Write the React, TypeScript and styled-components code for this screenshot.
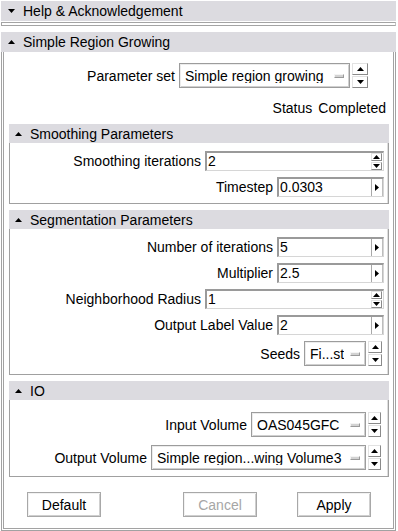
import React from 'react';
import styled, { createGlobalStyle } from 'styled-components';

const GlobalStyle = createGlobalStyle`
    html, body {
        margin: 0;
        padding: 0;
        background: #fff;
    }
    body {
        font-family: "Liberation Sans", Arial, Helvetica, sans-serif;
        font-size: 14px;
        color: #000;
    }
    * {
        box-sizing: border-box;
    }
`;

/**
 * Frames and headers.
 */
const Page = styled.div`
    width: 398px;
    height: 531px;
    padding: 1px 2px 0 1px;
    overflow: hidden;
`;
const Header = styled.div<{ $inner?: boolean }>`
    display: flex;
    align-items: center;
    gap: 8px;
    height: ${p => p.$inner ? 19 : 20}px;
    padding-left: ${p => p.$inner ? 6 : 7}px;
    background: #dcdbe0;
    line-height: 1;
    white-space: nowrap;
`;
const CollapsedBody = styled.div`
    margin: 1px 0 6px;
    height: 4px;
    border: 1px solid #a4a4a4;
    border-right-color: #c4c4c4;
`;
const OuterBody = styled.div`
    padding: 11px 4px 11px 5px;
    border: 3px double #a2a2a2;
    border-top: 0;
`;
const Section = styled.div`
    margin-top: 6px;
`;
const SectionBody = styled.div<{ $pt: number; $pb: number; $gap: number }>`
    display: flex;
    flex-direction: column;
    gap: ${p => p.$gap}px;
    padding: ${p => p.$pt}px 4px ${p => p.$pb}px 4px;
    border: 1px solid #a0a0a0;
    border-top: 0;
    box-shadow: inset -1px 0 0 #dedede;
`;

/**
 * Rows and widgets.
 */
const Row = styled.div<{ $pr?: number; $mt?: number; $h?: number }>`
    display: flex;
    align-items: center;
    justify-content: flex-end;
    gap: 4px;
    height: ${p => p.$h ?? 20}px;
    margin-top: ${p => p.$mt ?? 0}px;
    margin-right: ${p => p.$pr ?? 0}px;
    white-space: nowrap;
`;
const Label = styled.span`
    line-height: 1;
`;
const StatusValue = styled.span`
    margin-left: 2px;
    line-height: 1;
`;
const Entry = styled.div<{ $w: number }>`
    display: flex;
    align-items: stretch;
    width: ${p => p.$w}px;
    height: 20px;
    background: #fff;
    border-style: solid;
    border-width: 2px 1px 1px 2px;
    border-color: #9a9a9a #d6d6d6 #d6d6d6 #9a9a9a;
`;
const EntryValue = styled.span`
    flex: 1;
    padding-left: 1px;
    line-height: 17px;
`;
const InlineSpin = styled.div`
    display: flex;
    flex-direction: column;
    gap: 1px;
    width: 11px;
    margin-right: 1px;
`;
const SpinButton = styled.div`
    display: flex;
    align-items: center;
    justify-content: center;
    flex: 1;
    background: #fff;
    border-style: solid;
    border-width: 1px;
    border-color: #e2e2e2 #8a8a8a #8a8a8a #e2e2e2;
`;
const ArrowButton = styled.div`
    display: flex;
    align-items: center;
    justify-content: center;
    width: 12px;
    border-left: 1px solid #a8a8a8;
    border-right: 1px solid #bdbdbd;
`;
const ComboGroup = styled.div`
    display: flex;
    align-items: stretch;
    gap: 2px;
    height: 25px;
`;
const Combo = styled.div<{ $w: number }>`
    display: flex;
    align-items: center;
    width: ${p => p.$w}px;
    padding: 0 5px 0 5px;
    background: #fff;
    border: 1px solid #9c9c9c;
    box-shadow: inset 1px 1px 0 #ececec, inset -1px -1px 0 #d0d0d0;
`;
const ComboText = styled.span`
    flex: 1;
    overflow: hidden;
    line-height: 1;
`;
const Indicator = styled.span`
    width: 10px;
    height: 4px;
    margin-left: 6px;
    background: #d2d2d2;
    border-style: solid;
    border-width: 1px;
    border-color: #f4f4f4 #9a9a9a #9a9a9a #f4f4f4;
`;
const Spin = styled.div<{ $w: number }>`
    display: flex;
    flex-direction: column;
    gap: 1px;
    width: ${p => p.$w}px;
`;
const ButtonBar = styled.div`
    display: flex;
    margin-top: 15px;
`;
const Button = styled.div<{ $ml: number; $disabled?: boolean }>`
    display: flex;
    align-items: center;
    justify-content: center;
    width: 74px;
    height: 25px;
    margin-left: ${p => p.$ml}px;
    color: ${p => p.$disabled ? '#a6a6a6' : '#000'};
    border: 1px solid #a8a8a8;
    box-shadow: inset 1px 1px 0 #f2f2f2, inset -1px -1px 0 #cfcfcf;
    line-height: 1;
`;

/**
 * Small drawn parts.
 */
function Tri(props: { dir: 'up' | 'down' | 'right'; w?: number; h?: number }) {
    const { dir } = props;
    const w = props.w ?? (dir === 'right' ? 4 : 7);
    const h = props.h ?? (dir === 'right' ? 7 : 4);
    const points = dir === 'up'
        ? `0,${h} ${w / 2},0 ${w},${h}`
        : dir === 'down'
            ? `0,0 ${w / 2},${h} ${w},0`
            : `0,0 ${w},${h / 2} 0,${h}`;
    return (
        <svg width={w} height={h} viewBox={`0 0 ${w} ${h}`} style={{ display: 'block' }}>
            <polygon points={points} fill="#000" />
        </svg>
    );
}

function SpinPair(props: { w: number }) {
    return (
        <Spin $w={props.w}>
            <SpinButton><Tri dir="up" /></SpinButton>
            <SpinButton><Tri dir="down" /></SpinButton>
        </Spin>
    );
}

function SpinEntry(props: { w: number; value: string }) {
    return (
        <Entry $w={props.w}>
            <EntryValue>{props.value}</EntryValue>
            <InlineSpin>
                <SpinButton><Tri dir="up" /></SpinButton>
                <SpinButton><Tri dir="down" /></SpinButton>
            </InlineSpin>
        </Entry>
    );
}

function ArrowEntry(props: { w: number; value: string }) {
    return (
        <Entry $w={props.w}>
            <EntryValue>{props.value}</EntryValue>
            <ArrowButton><Tri dir="right" /></ArrowButton>
        </Entry>
    );
}

function ComboSpin(props: { w: number; spin: number; value: string }) {
    return (
        <ComboGroup>
            <Combo $w={props.w}>
                <ComboText>{props.value}</ComboText>
                <Indicator />
            </Combo>
            <SpinPair w={props.spin} />
        </ComboGroup>
    );
}

export default function App() {
    return (
        <Page>
            <GlobalStyle />
            <Header>
                <Tri dir="down" />
                <span>Help &amp; Acknowledgement</span>
            </Header>
            <CollapsedBody />

            <Header>
                <Tri dir="up" />
                <span>Simple Region Growing</span>
            </Header>
            <OuterBody>
                <Row $h={25} $pr={21}>
                    <Label>Parameter set</Label>
                    <ComboSpin w={171} spin={16} value="Simple region growing" />
                </Row>
                <Row $mt={10} $pr={3}>
                    <Label>Status</Label>
                    <StatusValue>Completed</StatusValue>
                </Row>

                <Section>
                    <Header $inner>
                        <Tri dir="up" />
                        <span>Smoothing Parameters</span>
                    </Header>
                    <SectionBody $pt={8} $pb={6} $gap={6}>
                        <Row>
                            <Label>Smoothing iterations</Label>
                            <SpinEntry w={179} value="2" />
                        </Row>
                        <Row>
                            <Label>Timestep</Label>
                            <ArrowEntry w={107} value="0.0303" />
                        </Row>
                    </SectionBody>
                </Section>

                <Section>
                    <Header $inner>
                        <Tri dir="up" />
                        <span>Segmentation Parameters</span>
                    </Header>
                    <SectionBody $pt={8} $pb={8} $gap={6}>
                        <Row>
                            <Label>Number of iterations</Label>
                            <ArrowEntry w={107} value="5" />
                        </Row>
                        <Row>
                            <Label>Multiplier</Label>
                            <ArrowEntry w={107} value="2.5" />
                        </Row>
                        <Row>
                            <Label>Neighborhood Radius</Label>
                            <SpinEntry w={179} value="1" />
                        </Row>
                        <Row>
                            <Label>Output Label Value</Label>
                            <ArrowEntry w={107} value="2" />
                        </Row>
                        <Row $h={25} $pr={2}>
                            <Label>Seeds</Label>
                            <ComboSpin w={62} spin={14} value="Fi...st" />
                        </Row>
                    </SectionBody>
                </Section>

                <Section>
                    <Header $inner>
                        <Tri dir="up" />
                        <span>IO</span>
                    </Header>
                    <SectionBody $pt={12} $pb={6} $gap={8}>
                        <Row $h={25} $pr={3}>
                            <Label>Input Volume</Label>
                            <ComboSpin w={115} spin={13} value="OAS045GFC" />
                        </Row>
                        <Row $h={25} $pr={3}>
                            <Label>Output Volume</Label>
                            <ComboSpin w={215} spin={13} value="Simple region...wing Volume3" />
                        </Row>
                    </SectionBody>
                </Section>

                <ButtonBar>
                    <Button $ml={18}>Default</Button>
                    <Button $ml={82} $disabled>Cancel</Button>
                    <Button $ml={40}>Apply</Button>
                </ButtonBar>
            </OuterBody>
        </Page>
    );
}
